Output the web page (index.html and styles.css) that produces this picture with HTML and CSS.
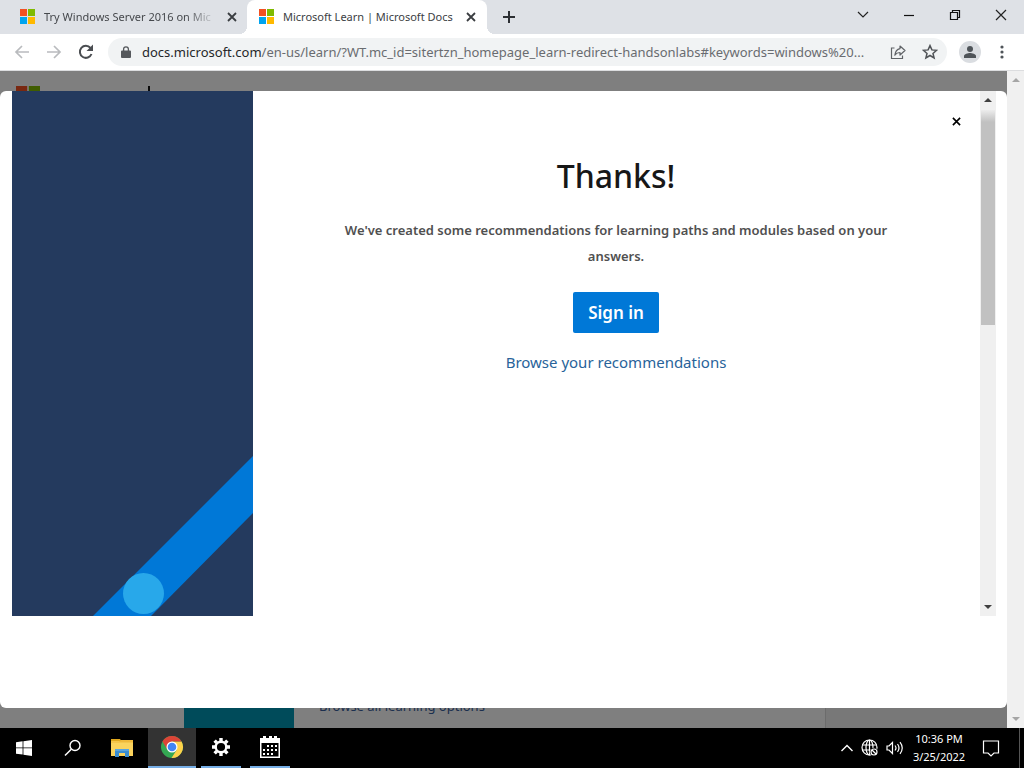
FILE: index.html
```html
<!DOCTYPE html>
<html lang="en">
<head>
<meta charset="utf-8">
<meta name="viewport" content="width=device-width, initial-scale=1">
<title>Microsoft Learn | Microsoft Docs</title>
<link rel="stylesheet" href="styles.css">
</head>
<body>
<svg class="defs" width="0" height="0" aria-hidden="true">
  <symbol id="ms" viewBox="0 0 15 15"><path fill="#f25022" d="M0 0h7v7H0z"/><path fill="#7fba00" d="M8 0h7v7H8z"/><path fill="#00a4ef" d="M0 8h7v7H0z"/><path fill="#ffb900" d="M8 8h7v7H8z"/></symbol>
  <symbol id="x" viewBox="0 0 10 10"><path d="M1 1l8 8M9 1l-8 8" fill="none" stroke="currentColor" stroke-width="1.8"/></symbol>
</svg>

<header class="tabstrip">
  <div class="tabs">
    <div class="tab">
      <svg class="favicon"><use href="#ms"/></svg>
      <span class="tab-title faded">Try Windows Server 2016 on Mic</span>
      <button class="tab-close" aria-label="Close tab"><svg width="10" height="10"><use href="#x"/></svg></button>
    </div>
    <div class="tab active">
      <svg class="favicon"><use href="#ms"/></svg>
      <span class="tab-title">Microsoft Learn | Microsoft Docs</span>
      <button class="tab-close" aria-label="Close tab"><svg width="10" height="10"><use href="#x"/></svg></button>
    </div>
    <button class="new-tab" aria-label="New tab"><svg width="12" height="12" viewBox="0 0 12 12"><path d="M6 0v12M0 6h12" stroke="#2c2f33" stroke-width="2"/></svg></button>
  </div>
  <div class="window-controls">
    <button aria-label="Search tabs"><svg width="12" height="12" viewBox="0 0 12 12"><path d="M1 3l5 5 5-5" fill="none" stroke="#222" stroke-width="1.2"/></svg></button>
    <button aria-label="Minimize"><svg width="12" height="12" viewBox="0 0 12 12"><path d="M1 6.500h10" stroke="#111" stroke-width="1.200"/></svg></button>
    <button aria-label="Restore"><svg width="12" height="12" viewBox="0 0 12 12"><path d="M1.500 3.500h7v7h-7zM3.500 3.500v-2h7v7h-2" fill="none" stroke="#111" stroke-width="1.200"/></svg></button>
    <button aria-label="Close"><svg width="12" height="12" viewBox="0 0 12 12"><path d="M1 1l10 10M11 1L1 11" stroke="#222" stroke-width="1.200"/></svg></button>
  </div>
</header>

<nav class="toolbar" aria-label="Browser toolbar">
  <button aria-label="Back"><svg width="16" height="16" viewBox="0 0 16 16"><path d="M15 8H2M8 2L2 8l6 6" fill="none" stroke="#b9bbbe" stroke-width="1.700"/></svg></button>
  <button aria-label="Forward"><svg width="16" height="16" viewBox="0 0 16 16"><path d="M1 8h13M8 2l6 6-6 6" fill="none" stroke="#b9bbbe" stroke-width="1.700"/></svg></button>
  <button aria-label="Reload"><svg width="16" height="16" viewBox="0 0 16 16"><path d="M13.500 10A6 6 0 1 1 12.500 4" fill="none" stroke="#4a4d51" stroke-width="2"/><path d="M15 .5v6.500H8.500z" fill="#4a4d51"/></svg></button>
  <div class="omnibox">
    <svg width="10" height="12" viewBox="0 0 10 12"><path d="M1 4.500h8a1 1 0 0 1 1 1V11a1 1 0 0 1-1 1H1a1 1 0 0 1-1-1V5.500a1 1 0 0 1 1-1z" fill="#55585c"/><path d="M2.600 5V3.200a2.400 2.400 0 0 1 4.800 0V5" fill="none" stroke="#55585c" stroke-width="1.300"/></svg>
    <a class="url" href="#"><span class="host">docs.microsoft.com</span>/en-us/learn/?WT.mc_id=sitertzn_homepage_learn-redirect-handsonlabs#keywords=windows%20...</a>
    <button aria-label="Share"><svg width="16" height="16" viewBox="0 0 16 16"><path d="M4.500 4H1.500v10.500h11V11.500" fill="none" stroke="#606367" stroke-width="1.200"/><path d="M10 2l5 4.500-5 4.500V8.500C7.500 8.500 6 9.500 4.800 11.200 5.200 8 6.800 5.200 10 4.600z" fill="none" stroke="#606367" stroke-width="1.200" stroke-linejoin="round"/></svg></button>
    <button aria-label="Bookmark"><svg width="16" height="16" viewBox="0 0 16 16"><path d="M8 1.600l1.900 4.300 4.700.4-3.600 3.100 1.100 4.600L8 11.500 3.900 14 5 9.400 1.400 6.300l4.700-.4z" fill="none" stroke="#505357" stroke-width="1.500"/></svg></button>
  </div>
  <button class="avatar" aria-label="Profile"><svg width="12" height="12" viewBox="0 0 12 12"><circle cx="6" cy="3" r="3" fill="#4f5459"/><path d="M0 12v-2c0-2 4-3 6-3s6 1 6 3v2z" fill="#4f5459"/></svg></button>
  <button class="more" aria-label="Menu"><svg width="4" height="14" viewBox="0 0 4 14" fill="#4f5459"><circle cx="2" cy="2" r="1.600"/><circle cx="2" cy="7" r="1.600"/><circle cx="2" cy="12" r="1.600"/></svg></button>
</nav>

<div class="page">
  <div class="viewport">
    <div class="backdrop" aria-hidden="true">
      <div class="site-header"><svg class="site-logo"><use href="#ms"/></svg><span class="site-divider"></span></div>
      <div class="site-card">
        <div class="card-art"></div>
        <div class="card-link">Browse all learning options</div>
        <div class="card-side"></div>
      </div>
    </div>
    <main class="modal" role="dialog" aria-labelledby="title">
      <svg class="art" viewBox="0 0 241 525" preserveAspectRatio="xMaxYMax slice"><path fill="#243a5e" d="M-400-400h641v925h-641z"/><path fill="#0078d7" d="M241 365v57L139 525H81z"/><circle cx="131.500" cy="502.500" r="20.500" fill="#28a8ea"/></svg>
      <section class="content">
        <button class="dismiss" aria-label="Close"><svg width="10" height="10"><use href="#x"/></svg></button>
        <h1 id="title">Thanks!</h1>
        <p>We've created some recommendations for learning paths and modules based on your answers.</p>
        <button class="sign-in">Sign in</button>
        <a class="browse" href="#">Browse your recommendations</a>
      </section>
      <div class="scrollbar inner"><span class="arrow up"></span><span class="thumb"></span><span class="arrow down"></span></div>
    </main>
  </div>
  <div class="scrollbar outer"><span class="arrow up"></span><span class="arrow down"></span></div>
</div>

<footer class="taskbar">
  <div class="apps">
    <button aria-label="Start"><svg width="16" height="16" viewBox="0 0 16 16"><path fill="#fff" d="M0 2.300L6.600 1.300v6.200H0zM7.400 1.200L16 0v7.500H7.400zM0 8.300h6.600v6.300L0 13.700zM7.400 8.300H16V16l-8.600-1.200z"/></svg></button>
    <button aria-label="Search"><svg width="18" height="18" viewBox="0 0 18 18"><circle cx="11" cy="6.500" r="5" fill="none" stroke="#fff" stroke-width="1.400"/><path d="M7.300 10.200L1 16.500" stroke="#fff" stroke-width="1.500"/></svg></button>
    <button aria-label="File Explorer"><svg width="22" height="20" viewBox="0 0 22 20"><path fill="#e0a81e" d="M0 1h9l1.500 2H0z"/><path fill="#fbd35d" d="M0 3h22v15H0z"/><path fill="#f0b93a" d="M0 3.500l8 0 2-1.500h12v2.500H0z"/><path fill="#3b8dd0" d="M4 11h14v8h-4v-4H8v4H4z"/><path fill="#5aa4de" d="M4 11h14v2H4z"/></svg></button>
    <button class="running current" aria-label="Google Chrome"><svg width="24" height="24" viewBox="0 0 24 24"><circle cx="12" cy="12" r="11" fill="#34a853"/><path fill="#ffd24a" d="M12 6.500h9.500A11 11 0 0 1 11.500 23l5.300-8.300z"/><path fill="#dc4437" d="M12 1A11 11 0 0 1 21.500 6.500H12L7.300 14.800 2.500 6.500A11 11 0 0 1 12 1z"/><circle cx="12" cy="12" r="5.500" fill="#fff"/><circle cx="12" cy="12" r="4.300" fill="#4285f4"/></svg></button>
    <button class="running" aria-label="Settings"><svg width="20" height="20" viewBox="-10 -10 20 20" fill="none" stroke="#fff"><circle r="5.300" stroke-width="2.400"/><path stroke-width="3.400" d="M0-6v-3M0 6v3M-6 0h-3M6 0h3M4.200-4.200l2.200-2.200M-4.200 4.200l-2.200 2.200M-4.200-4.200l-2.200-2.200M4.200 4.200l2.200 2.200"/></svg></button>
    <button class="running" aria-label="Calendar"><svg width="20" height="24" viewBox="0 0 20 24"><path fill="#fff" d="M0 3h3V1h3v2h3V1h3v2h2V1h3v2h3v20H0z"/><path d="M1.500 8h17v13.500h-17z"/><path d="M7 11h11M3 15h14M3 19h11" stroke="#fff" stroke-width="2" stroke-dasharray="2 2"/></svg></button>
  </div>
  <div class="tray">
    <button aria-label="Show hidden icons"><svg width="14" height="10" viewBox="0 0 14 10"><path d="M1.500 8L7 2.500 12.500 8" fill="none" stroke="#fff" stroke-width="1.400"/></svg></button>
    <button aria-label="Network"><svg width="18" height="18" viewBox="0 0 18 18" fill="none" stroke="#fff" stroke-width="1.200"><circle cx="8.500" cy="8.500" r="7.500"/><ellipse cx="8.500" cy="8.500" rx="3.500" ry="7.500"/><path d="M1.500 6h14M1.500 11h14M8.500 1v15"/><circle cx="13" cy="13" r="4.300" fill="#000" stroke="none"/><circle cx="13" cy="13" r="3"/><path d="M11 11l4 4"/></svg></button>
    <button aria-label="Volume"><svg width="18" height="14" viewBox="0 0 18 14" fill="none" stroke="#fff" stroke-width="1.200"><path d="M1 5h2l3.500-3.500v11L3 9H1zM9 4.500q2 2.500 0 5M11.500 3q3 4 0 8M14 1.200q4.500 5.800 0 11.600"/></svg></button>
    <div class="clock"><span>10:36 PM</span><span>3/25/2022</span></div>
    <button class="notify" aria-label="Notifications"><svg width="18" height="18" viewBox="0 0 18 18"><path d="M1.500 2h15v12H12l-3 3-3-3H1.500z" fill="none" stroke="#fff" stroke-width="1.200"/></svg></button>
    <span class="peek"></span>
  </div>
</footer>
</body>
</html>
```
FILE: styles.css
```css
* { box-sizing: border-box; }

body {
  margin: 0;
  height: 100vh;
  display: flex;
  flex-direction: column;
  overflow: hidden;
  font-family: "Noto Sans", "Open Sans", sans-serif;
  background: #fff;
}

button {
  margin: 0;
  padding: 0;
  border: 0;
  background: none;
  font: inherit;
  color: inherit;
  display: flex;
  align-items: center;
  justify-content: center;
  flex-shrink: 0;
}

svg { flex-shrink: 0; }
.defs { display: none; }

/* Tab strip */
.tabstrip {
  height: 34px;
  flex-shrink: 0;
  display: flex;
  justify-content: space-between;
  background: #dee1e6;
}
.tabs { display: flex; min-width: 0; }
.tab {
  display: flex;
  align-items: center;
  gap: 9px;
  width: 240px;
  padding: 0 10px 1px 12px;
  color: #45484c;
}
.tab:first-child { width: 247px; padding-left: 20px; padding-right: 9px; }
.tab.active { position: relative; background: #fff; border-radius: 8px 8px 0 0; color: #3c4043; }
.tab.active::before,
.tab.active::after {
  content: "";
  position: absolute;
  bottom: 0;
  width: 8px;
  height: 8px;
}
.tab.active::before { right: 100%; background: radial-gradient(circle at 0 0, transparent 8px, #fff 8px); }
.tab.active::after { left: 100%; background: radial-gradient(circle at 100% 0, transparent 8px, #fff 8px); }
.favicon { width: 15px; height: 15px; }
.tab-title { flex: 1; min-width: 0; overflow: hidden; white-space: nowrap; font-size: 11px; }
.faded { -webkit-mask-image: linear-gradient(to right, #000 82%, transparent); mask-image: linear-gradient(to right, #000 82%, transparent); }
.tab-close { color: #3a3d41; width: 12px; height: 16px; }
.new-tab { width: 44px; }
.window-controls { display: flex; margin-bottom: 4px; }
.window-controls button { width: 46px; }

/* Toolbar */
.toolbar {
  height: 37px;
  flex-shrink: 0;
  display: flex;
  align-items: center;
  gap: 16px;
  padding: 0 14px;
  border-bottom: 1px solid #dcdddf;
}
.omnibox {
  flex: 1;
  min-width: 0;
  height: 28px;
  display: flex;
  align-items: center;
  gap: 11px;
  margin: 0 -4px 0 -2px;
  padding: 0 9px 0 13px;
  border-radius: 14px;
  background: #f1f3f4;
}
.url {
  flex: 1;
  min-width: 0;
  overflow: hidden;
  white-space: nowrap;
  text-decoration: none;
  font-size: 13px;
  color: #696c70;
}
.host { color: #25272a; }
.omnibox button + button { margin-left: 5px; }
.avatar { width: 22px; height: 22px; border-radius: 50%; background: #dadde1; }
.more { width: 16px; margin-left: -3px; }

/* Page */
.page { flex: 1; min-height: 0; display: flex; }
.viewport { flex: 1; min-width: 0; display: grid; grid-template: minmax(0, 1fr) / minmax(0, 1fr); background: #7f7f7f; }
.backdrop, .modal { grid-area: 1 / 1; }
.backdrop { display: flex; flex-direction: column; justify-content: space-between; overflow: hidden; }
.site-header { display: flex; align-items: flex-start; justify-content: flex-start; gap: 108px; padding: 15px 16px; }
.site-logo { width: 24px; height: 24px; filter: brightness(0.5); }
.site-divider { width: 2px; height: 24px; background: #0b0b0b; }
.site-card { display: flex; height: 40px; margin-left: 184px; }
.card-art { width: 110px; background: #004b5a; }
.card-link { flex: 1; padding: 9px 25px; font-size: 13px; line-height: 18px; color: #1b2f4e; }
.card-side { width: 182px; border-left: 1px solid #6c6c6c; background: #787878; }

.modal {
  z-index: 1;
  display: grid;
  grid-template-columns: 241fr 727fr 16px;
  grid-template-rows: 525fr 92fr;
  margin: 20px 0;
  padding: 0 11px 0 12px;
  border-radius: 6px;
  background: #fff;
}
.art { width: 100%; height: 100%; min-height: 0; }
.content {
  display: flex;
  flex-direction: column;
  align-items: center;
  min-width: 0;
  padding: 0 16px 0 15px;
  text-align: center;
}
.dismiss { align-self: flex-end; width: 16px; height: 16px; margin-top: 22px; color: #000; }
.dismiss svg { width: 9px; height: 9px; }
h1 { margin: 22px 0 0; font-size: 32px; line-height: 50px; font-weight: 500; color: #171717; }
p { margin: 16px 0 0; max-width: 570px; font-size: 13px; line-height: 26px; font-weight: 600; color: #505050; }
.sign-in {
  margin-top: 23px;
  padding: 0 15px;
  height: 41px;
  border-radius: 2px;
  background: #0078d7;
  color: #fff;
  font-size: 17px;
  font-weight: 600;
}
.browse { margin-top: 17px; font-size: 15px; line-height: 24px; color: #28639a; text-decoration: none; }

/* Scrollbars */
.scrollbar { display: flex; flex-direction: column; align-items: center; background: #f0f0f0; }
.outer { width: 17px; justify-content: space-between; padding: 7px 0; color: #a5a5a5; }
.inner { padding: 7px 0; color: #404040; }
.thumb { width: 14px; height: 42%; margin-top: 8px; background: linear-gradient(#ececec, #c1c1c1 12px); }
.inner .down { margin-top: auto; }
.arrow { border: 4px solid transparent; }
.up { border-top: 0; border-bottom-color: currentColor; }
.down { border-bottom: 0; border-top-color: currentColor; }

/* Taskbar */
.taskbar { height: 40px; flex-shrink: 0; display: flex; justify-content: space-between; background: #000; color: #fff; }
.apps { display: flex; gap: 1px; }
.apps button { width: 48px; }
.running { border-bottom: 2px solid #76aee6; background-clip: padding-box; margin: 0 4px; }
.apps .running { width: 40px; }
.apps .current { width: 48px; margin: 0 0 0 1px; background-color: #333; }
.tray { display: flex; align-items: center; gap: 7px; }
.clock { display: flex; flex-direction: column; align-items: center; width: 56px; font-size: 11px; line-height: 18px; }
.notify { margin: 0 12px 0 8px; }
.peek { width: 5px; height: 100%; border-left: 1px solid #555; }
```
